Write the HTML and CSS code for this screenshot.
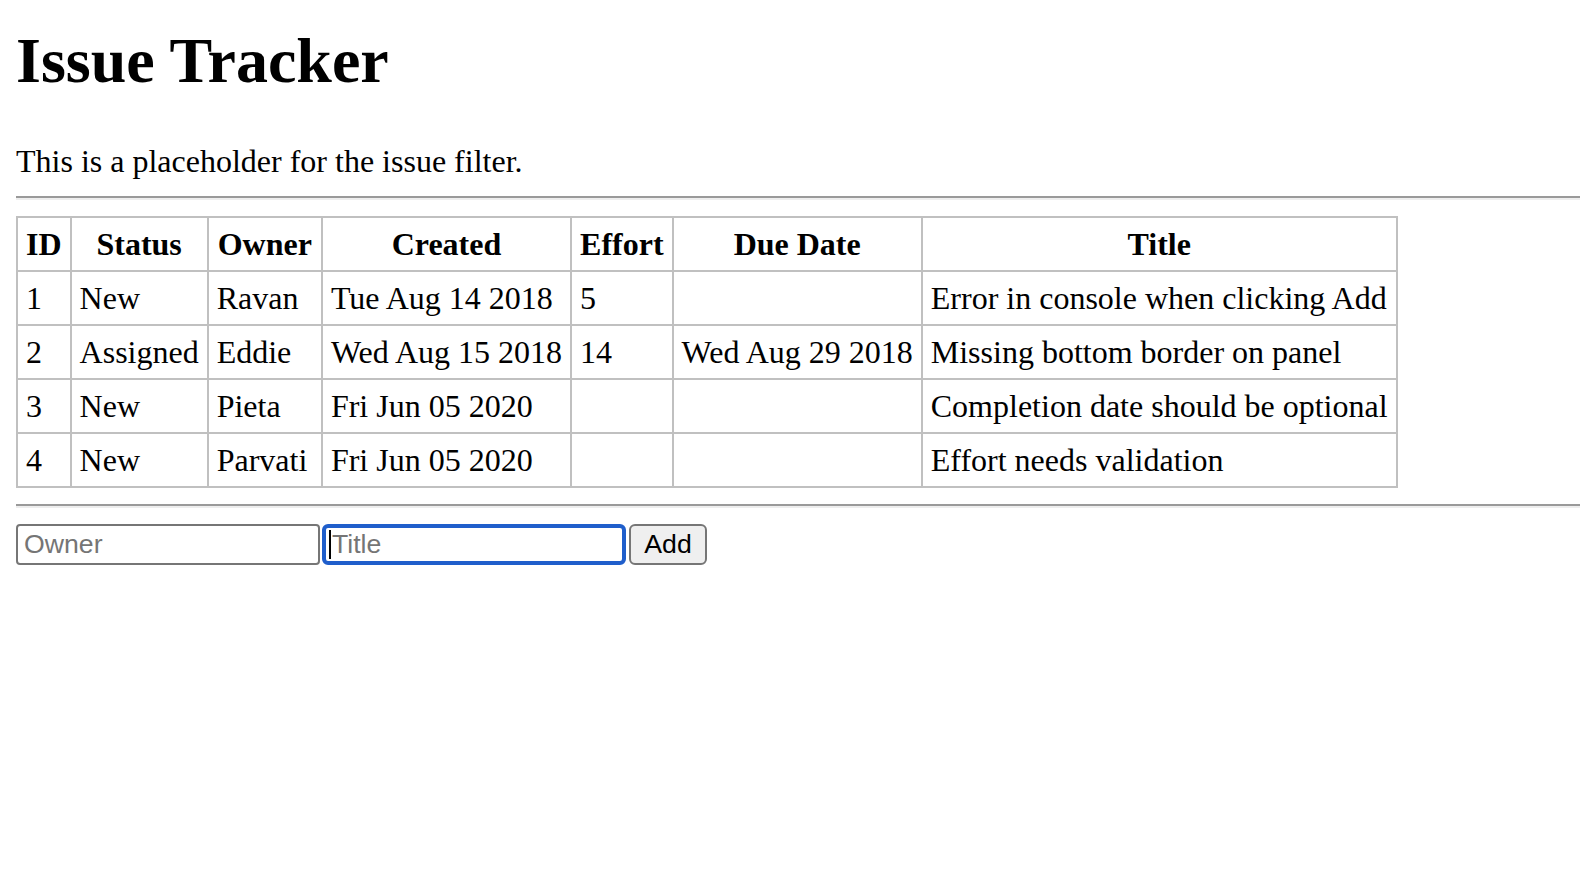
FILE: index.html
```html
<!DOCTYPE html>
<html lang="en">
<head>
<meta charset="utf-8">
<title>Issue Tracker</title>
<link rel="stylesheet" href="styles.css">
</head>
<body class="page">
  <h1 class="page-title">Issue Tracker</h1>
  <div class="filter">This is a placeholder for the issue filter.</div>
  <hr class="rule rule-top">
  <table class="bordered-table">
    <thead>
      <tr>
        <th>ID</th>
        <th>Status</th>
        <th class="col-owner">Owner</th>
        <th>Created</th>
        <th>Effort</th>
        <th class="col-due">Due Date</th>
        <th>Title</th>
      </tr>
    </thead>
    <tbody>
      <tr>
        <td>1</td>
        <td>New</td>
        <td>Ravan</td>
        <td>Tue Aug 14 2018</td>
        <td>5</td>
        <td></td>
        <td>Error in console when clicking Add</td>
      </tr>
      <tr>
        <td>2</td>
        <td>Assigned</td>
        <td>Eddie</td>
        <td>Wed Aug 15 2018</td>
        <td>14</td>
        <td>Wed Aug 29 2018</td>
        <td>Missing bottom border on panel</td>
      </tr>
      <tr>
        <td>3</td>
        <td>New</td>
        <td>Pieta</td>
        <td>Fri Jun 05 2020</td>
        <td></td>
        <td></td>
        <td>Completion date should be optional</td>
      </tr>
      <tr>
        <td>4</td>
        <td>New</td>
        <td>Parvati</td>
        <td>Fri Jun 05 2020</td>
        <td></td>
        <td></td>
        <td>Effort needs validation</td>
      </tr>
    </tbody>
  </table>
  <hr class="rule rule-bottom">
  <form class="add-form" name="issueAdd">
    <input class="field" type="text" name="owner" placeholder="Owner">
    <span class="field-wrap">
      <input class="field field-focused" type="text" name="title" placeholder="Title">
      <span class="caret"></span>
    </span>
    <button class="add-button" type="button">Add</button>
  </form>
</body>
</html>
```

FILE: styles.css
```css
html, body {
  background: #ffffff;
}

.page {
  margin: 0 0 0 16px;
  font-family: "Liberation Serif", "Times New Roman", serif;
  color: #000000;
}

.page-title {
  font-size: 64px;
  font-weight: bold;
  line-height: 64px;
  margin: 29px 0 0 0;
}

.filter {
  font-size: 32px;
  line-height: 36px;
  margin-top: 50px;
}

.rule {
  height: 0;
  border: 0;
  border-top: 2px solid #9a9a9a;
  border-bottom: 2px solid #eeeeee;
  margin-left: 0;
  margin-right: 0;
}

.rule-top {
  margin-top: 17px;
  margin-bottom: 16px;
}

.rule-bottom {
  margin-top: 16px;
  margin-bottom: 16px;
}

.bordered-table {
  border-collapse: collapse;
  font-size: 32px;
  line-height: 36px;
}

.bordered-table th,
.bordered-table td {
  border: 2px solid #c0c0c0;
  padding: 8px;
  white-space: nowrap;
}

.bordered-table th {
  font-weight: bold;
  text-align: center;
}

.bordered-table td {
  text-align: left;
}

.bordered-table .col-owner,
.bordered-table .col-due {
  padding-left: 9px;
  padding-right: 9px;
}

.add-form {
  display: flex;
  align-items: flex-start;
  gap: 2px;
  margin: 0;
}

.field {
  box-sizing: border-box;
  width: 304px;
  height: 41px;
  margin: 0;
  padding: 0 4px 0 6px;
  border: 2px solid #767676;
  border-radius: 4px;
  font-family: "Liberation Sans", Arial, sans-serif;
  font-size: 26.67px;
  color: #000000;
  background: #ffffff;
  outline: none;
}

.field::placeholder {
  color: #757575;
}

.field-wrap {
  position: relative;
  display: block;
}

.field-focused {
  border: 4px solid #1f5ecb;
  border-radius: 6px;
  padding: 0 1px 0 6px;
}

.caret {
  position: absolute;
  left: 7px;
  top: 6px;
  width: 2px;
  height: 29px;
  background: #000000;
}

.add-button {
  box-sizing: border-box;
  width: 78px;
  height: 41px;
  margin: 0 0 0 1px;
  padding: 0;
  border: 2px solid #767676;
  border-radius: 6px;
  background: #efefef;
  font-family: "Liberation Sans", Arial, sans-serif;
  font-size: 26.67px;
  color: #000000;
}
```
